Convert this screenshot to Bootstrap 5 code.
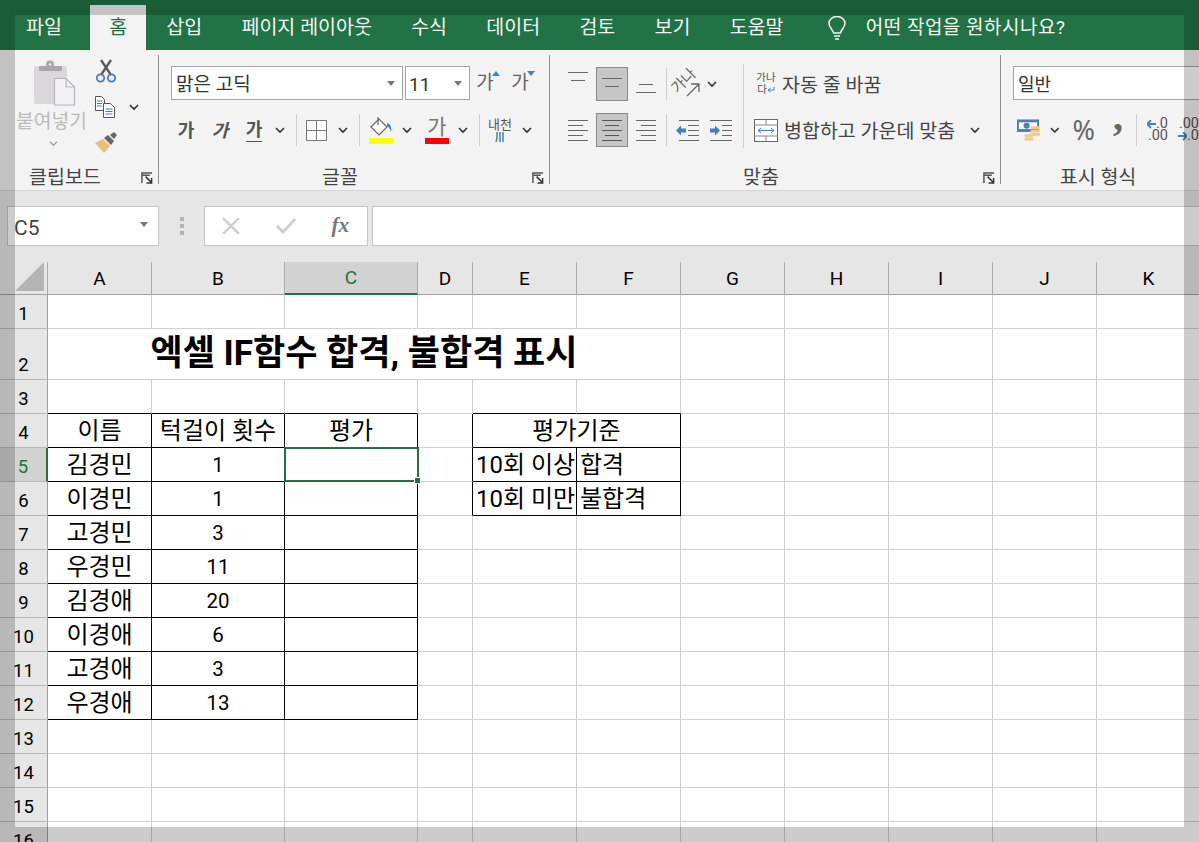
<!DOCTYPE html>
<html lang="ko">
<head>
<meta charset="utf-8">
<title>Excel</title>
<link href="https://cdn.jsdelivr.net/npm/bootstrap@5.3.0/dist/css/bootstrap.min.css" rel="stylesheet">
<style>
html,body{height:842px;overflow:hidden}
body{font-family:Roboto,"Noto Sans CJK KR",sans-serif;background:#fff;color:#000;width:1199px}
.xl-frame{position:fixed;inset:0;border:15px solid rgba(0,0,0,.2);pointer-events:none;z-index:20}
.xl-tabs{height:50px;background:#217346;color:#f4f8f5;font-size:19.5px;padding-left:7px}
.xl-tab{padding:0 19px;margin-right:1.25px;height:45px;margin-top:5px;line-height:46px;white-space:nowrap}
.xl-tab-on{background:#f3f3f3;color:#217346;margin-left:8px}
.xl-tell{margin-left:23px;margin-top:5px;height:45px;gap:19px;font-size:19px;letter-spacing:.5px}
.xl-tell span{padding-top:2px}
.xl-ribbon{height:141px;background:#f3f3f3;border-bottom:1px solid #d4d4d4;color:#444;font-size:18px;overflow:hidden}
.xl-group{padding-top:5px;height:134px;position:relative;flex:none}
.xl-g1{width:159px}.xl-g2{width:391px}.xl-g3{width:451px}.xl-g4{width:198px}
.xl-body{height:112px;border-right:1px solid #8f8f8f}
.xl-foot{height:17px;border-right:1px solid #8f8f8f;line-height:21px;font-size:19.5px;color:#444}
.xl-label{flex:1;text-align:center;white-space:nowrap}
.xl-launch{width:28px;padding-left:11px;padding-top:5px;line-height:0}
.xl-paste{width:73px;margin-left:15px;margin-right:2px;color:#bbb;padding-top:5px;font-size:19.3px;line-height:26px;text-align:center;white-space:nowrap}
.xl-paste svg{display:block;margin:0 auto 3px 18px}
.xl-clipsmall{padding-left:5px}
.xl-combo{height:34px;background:#fff;border:1px solid #a3a3a3;color:#333;font-size:19px;line-height:34px;padding:0 7px 0 4px;flex:none}
.xl-combo span{padding-top:3px}
.xl-row1{height:34px;margin-top:11px}
.xl-row2{height:34px;margin-top:13px}
.xl-rowa{height:34px;margin-top:12px}
.xl-btn{flex:none;display:flex;align-items:center;justify-content:center;height:34px;color:#555}
.xl-grow{font-size:19px;color:#666}
.xl-div{flex:none;width:1px;height:32px;background:#cdcdcd}
.xl-tall{flex:none;width:1px;height:84px;background:#cdcdcd;margin-top:9px}
.xl-bold{font-weight:700;font-size:18px;color:#555}
.xl-under{border-bottom:1px solid #555;line-height:22px}
.xl-ital{font-style:italic}
.xl-tiny{font-size:13px;line-height:13px;color:#555;text-align:center}
.xl-wrapi{font-size:10.5px;line-height:12px;width:20px;white-space:nowrap}
.xl-orient{position:relative;width:34px;height:34px;flex:none}
.xl-rot{position:absolute;left:1px;top:6px;transform:rotate(-45deg);font-size:15px;line-height:16px;color:#666;white-space:nowrap}
.xl-orient svg{position:absolute;left:17px;top:16px}
.xl-active{background:#c6c6c6;border:1px solid #8a8a8a;height:34px;width:32px}
.xl-text{font-size:19.5px;color:#444;white-space:nowrap;line-height:34px;padding-top:4px}
.xl-pct{font-size:27px;color:#666;line-height:34px;font-family:"Noto Sans",sans-serif}
.xl-comma{font-size:40px;font-weight:700;font-family:"Liberation Serif",serif;color:#666;line-height:34px;transform:translateY(-13px)}
.xl-dec{font-size:14.5px;line-height:12px;color:#555;text-align:right;white-space:nowrap}
.xl-fbar{height:71px;background:#e6e6e6;padding:15px 0 16px 7px;color:#444}
.xl-name{width:152px;height:40px;background:#fff;border:1px solid #c6c6c6;font-size:21px;padding:0 10px 0 6px;color:#444}
.xl-name span{padding-top:6px}
.xl-name svg{margin-bottom:3px}
.xl-dots{width:45px;gap:3px}
.xl-dots i{display:block;width:4px;height:4px;background:#b4b4b4}
.xl-fx{width:164px;height:40px;background:#fff;border:1px solid #c6c6c6;padding:0 18px 0 17px;margin-right:4px}
.xl-fxt{font-family:"Liberation Serif",serif;font-style:italic;font-weight:700;font-size:21px;color:#777}
.xl-input{flex:1;height:40px;background:#fff;border:1px solid #c6c6c6;border-right:0}
.xl-sheet.table{width:1201px;table-layout:fixed;border-collapse:separate;border-spacing:0;margin:0;color:#000;font-size:24px}
.xl-sheet.table>*>*>*{padding:0;height:34px;background:#fff;border:0;border-right:1px solid #d0d0d0;border-bottom:1px solid #d0d0d0;text-align:center;vertical-align:bottom;line-height:31px;box-shadow:none;font-weight:400;white-space:nowrap;overflow:visible}
.xl-sheet.table>thead>tr>*{height:33px;background:#e6e6e6;border-right-color:#ababab;border-bottom-color:#9f9f9f;font-size:19px;line-height:31px}
.xl-sheet.table>*>tr>th[scope=row]{background:#e6e6e6;border-right-color:#9f9f9f;border-bottom-color:#b8b8b8;font-size:18.5px;line-height:28px}
.xl-sheet.table>thead>tr>th.xl-hcol{background:#d2d2d2;color:#217346;border-bottom:2px solid #217346}
.xl-sheet.table>*>tr>th.xl-hrow{background:#d2d2d2;color:#217346;border-right:2px solid #217346}
.xl-sheet.table>*>tr.xl-tallrow>*{height:51px}
.xl-sheet.table>*>tr>.xl-title{font-size:35px;font-weight:700;line-height:43px;padding-bottom:4px}
.xl-sheet.table>*>tr>td.xl-bb{border-bottom-color:#000}
.xl-sheet.table>*>tr>td.xl-br{border-right-color:#000}
.xl-sheet.table>*>tr>td.xl-num{font-size:20.5px;line-height:31px}
.xl-sheet.table>*>tr>td.xl-left{text-align:left;padding-left:3px}
.xl-sel{position:absolute;top:-1px;left:-1px;right:-2px;bottom:-1px;border:2px solid #217346}
.xl-handle{position:absolute;right:-4px;bottom:-4px;width:7px;height:7px;background:#217346;border:1px solid #fff}
</style>
</head>
<body>
<svg width="0" height="0" class="position-absolute">
<symbol id="chev" viewBox="0 0 10 7"><path d="M1 1l4 4 4-4" fill="none" stroke="#333" stroke-width="1.6"/></symbol>
<symbol id="tri" viewBox="0 0 8 5"><path d="M0 0h8L4 5z" fill="#777"/></symbol>
<symbol id="launch" viewBox="0 0 13 13"><path d="M1 12V1h11M1.500 3.500h8" fill="none" stroke="#555" stroke-width="1.6"/><path d="M5 5l6 6M11.500 6.500v5.500h-5.500" fill="none" stroke="#333" stroke-width="1.6"/></symbol>
</svg>

<div class="xl-tabs d-flex">
  <div class="xl-tab">파일</div>
  <div class="xl-tab xl-tab-on">홈</div>
  <div class="xl-tab">삽입</div>
  <div class="xl-tab">페이지 레이아웃</div>
  <div class="xl-tab">수식</div>
  <div class="xl-tab">데이터</div>
  <div class="xl-tab">검토</div>
  <div class="xl-tab">보기</div>
  <div class="xl-tab">도움말</div>
  <div class="xl-tell d-flex align-items-center">
    <svg width="20" height="24" viewBox="0 0 20 24"><path d="M6.500 17c0-3-4.500-5-4.500-9.500a8 7 0 0 1 16 0c0 4.500-4.500 6.500-4.500 9.500z" fill="none" stroke="#f4f8f5" stroke-width="1.500"/><path d="M7 20h6M8 23h4" stroke="#f4f8f5" stroke-width="1.500"/></svg>
    <span>어떤 작업을 원하시나요?</span>
  </div>
</div>

<div class="xl-ribbon d-flex">
  <section class="xl-group xl-g1">
    <div class="xl-body d-flex">
      <div class="xl-paste">
        <svg width="44" height="46" viewBox="0 0 44 46"><rect x="1" y="6" width="33" height="38" rx="2" fill="#dbd8db"/><rect x="6" y="6" width="23" height="5" rx="1" fill="#a9a7a9"/><circle cx="17" cy="4.500" r="4" fill="#a9a7a9"/><circle cx="17" cy="4.500" r="1.200" fill="#f3f3f3"/><path d="M21.500 18.500H33l8.500 8.500v18h-20z" fill="#f3f1f5" stroke="#b5b5b5" stroke-width="1.200"/><path d="M33 18.500V27h8.500" fill="none" stroke="#b5b5b5" stroke-width="1.200"/></svg>
        <div>붙여넣기</div>
        <svg width="9" height="6" style="margin:6px auto 0 34px"><use href="#chev" opacity=".4"/></svg>
      </div>
      <div class="xl-clipsmall d-flex flex-column">
        <svg width="22" height="25" viewBox="0 0 22 25" class="mt-1"><path d="M6 1l10 15M16 1L6 16" stroke="#5a5a5a" stroke-width="2.300"/><circle cx="5.500" cy="19" r="3.700" fill="none" stroke="#4a7fb5" stroke-width="1.800"/><circle cx="16.500" cy="19" r="3.700" fill="none" stroke="#4a7fb5" stroke-width="1.800"/></svg>
        <div class="d-flex align-items-center" style="margin-top:12px">
          <svg width="21" height="22" viewBox="0 0 21 22"><path d="M.5.500h6l3 3v11h-9z" fill="#fff" stroke="#555"/><path d="M2 5h5M2 7.500h5M2 10h5" stroke="#4a7fb5"/><path d="M8.500 7.500h7l4 4v10h-11z" fill="#fff" stroke="#555"/><path d="M10.500 13h7M10.500 15.500h7M10.500 18h7" stroke="#4a7fb5"/></svg>
          <svg width="10" height="7" style="margin-left:13px"><use href="#chev"/></svg>
        </div>
        <svg width="23" height="21" viewBox="0 0 23 21" style="margin-top:14px"><path d="M0 11l8-4 7 7-6 7z" fill="#e8c07d"/><path d="M9 6l4-3 6 6-3 4z" fill="#666"/><path d="M15 3l4-3 3 3-3 4z" fill="#666"/></svg>
      </div>
    </div>
    <div class="xl-foot d-flex"><span class="xl-label">클립보드</span><span class="xl-launch"><svg width="12" height="12"><use href="#launch"/></svg></span></div>
  </section>

  <section class="xl-group xl-g2">
    <div class="xl-body d-flex flex-column ps-2">
      <div class="xl-row1 d-flex" style="margin-left:4px">
        <div class="xl-combo d-flex justify-content-between align-items-center" style="width:232px"><span>맑은 고딕</span><svg width="8" height="5"><use href="#tri"/></svg></div>
        <div class="xl-combo d-flex justify-content-between align-items-center" style="width:65px;margin-left:2px;padding-left:3px"><span>11</span><svg width="8" height="5"><use href="#tri"/></svg></div>
        <div class="xl-btn xl-grow" style="width:26px;margin-left:5px">가<svg width="8" height="5" viewBox="0 0 8 5" style="margin:-20px 0 0 -2px"><path d="M0 5h8L4 0z" fill="#4a7fb5"/></svg></div>
        <div class="xl-btn xl-grow" style="width:26px;margin-left:9px">가<svg width="8" height="5" viewBox="0 0 8 5" style="margin:-20px 0 0 -2px"><path d="M0 0h8L4 5z" fill="#4a7fb5"/></svg></div>
      </div>
      <div class="xl-row2 d-flex align-items-center" style="margin-left:2px">
        <div class="xl-btn xl-bold" style="width:34px">가</div>
        <div class="xl-btn xl-bold xl-ital" style="width:34px">가</div>
        <div class="xl-btn xl-bold" style="width:34px"><span class="xl-under">가</span></div>
        <svg width="10" height="7" class="ms-1"><use href="#chev"/></svg>
        <div class="xl-div" style="margin-left:11px"></div>
        <svg width="21" height="21" viewBox="0 0 21 21" style="margin-left:9px"><path d="M.5.500h20v20H.5zM10.500 0v21M0 10.500h21" fill="#fff" stroke="#777"/></svg>
        <svg width="10" height="7" style="margin-left:11px"><use href="#chev"/></svg>
        <div class="xl-div" style="margin-left:11px"></div>
        <svg width="24" height="27" viewBox="0 0 24 27" style="margin-left:9px"><path d="M2 10l8-8 8 8-8 8z" fill="#fff" stroke="#666" stroke-width="1.200"/><path d="M9 0v8" stroke="#666" stroke-width="1.200"/><path d="M18 6c4 1 5 5 4 9-1-3-2-5-4-6z" fill="#4a7fb5"/><rect y="21" width="24" height="6" fill="#ff0"/></svg>
        <svg width="10" height="7" style="margin-left:9px"><use href="#chev"/></svg>
        <div class="d-flex flex-column align-items-center" style="width:24px;margin-left:13px"><span style="font-size:21px;line-height:21px;color:#777">가</span><span class="d-block w-100" style="height:6px;background:#f00"></span></div>
        <svg width="10" height="7" style="margin-left:9px"><use href="#chev"/></svg>
        <div class="xl-div" style="margin-left:11px"></div>
        <div class="d-flex flex-column align-items-center" style="width:22px;margin-left:9px"><span class="xl-tiny text-nowrap">내천</span><svg width="10" height="12" viewBox="0 0 10 12"><path d="M2 1v6l-1 4M5 1v10M8 1v10" fill="none" stroke="#4a7fb5" stroke-width="1.500"/></svg></div>
        <svg width="10" height="7" style="margin-left:11px"><use href="#chev"/></svg>
      </div>
    </div>
    <div class="xl-foot d-flex"><span class="xl-label">글꼴</span><span class="xl-launch"><svg width="12" height="12"><use href="#launch"/></svg></span></div>
  </section>

  <section class="xl-group xl-g3">
    <div class="xl-body d-flex">
      <div style="width:193px;padding-left:14px">
        <div class="xl-rowa d-flex align-items-center">
          <div class="xl-btn" style="width:28px"><svg width="20" height="34" viewBox="0 0 20 34"><path d="M0 5.500h20M3 13.500h14" stroke="#666"/></svg></div>
          <div class="xl-btn xl-active" style="margin-left:4px"><svg width="20" height="16" viewBox="0 0 20 16"><path d="M0 2.500h20M3 10.500h14" stroke="#666"/></svg></div>
          <div class="xl-btn" style="width:28px;margin-left:4px"><svg width="20" height="34" viewBox="0 0 20 34"><path d="M3 17.500h14M0 25.500h20" stroke="#666"/></svg></div>
          <div class="xl-div" style="margin-left:6px"></div>
          <div class="xl-orient" style="margin-left:2px"><span class="xl-rot">가나</span><svg width="14" height="14" viewBox="0 0 14 14"><path d="M1 13L13 1M5 1h8v8" fill="none" stroke="#666" stroke-width="1.300"/></svg></div>
          <svg width="10" height="7" class="ms-1"><use href="#chev"/></svg>
        </div>
        <div class="xl-rowa d-flex align-items-center">
          <div class="xl-btn" style="width:28px"><svg width="20" height="21" viewBox="0 0 20 21"><path d="M0 .500h20M0 5.500h15M0 10.500h20M0 15.500h15M0 20.500h20" stroke="#666"/></svg></div>
          <div class="xl-btn xl-active" style="margin-left:4px"><svg width="20" height="21" viewBox="0 0 20 21"><path d="M0 .500h20M3 5.500h14M0 10.500h20M3 15.500h14M0 20.500h20" stroke="#555"/></svg></div>
          <div class="xl-btn" style="width:28px;margin-left:4px"><svg width="20" height="21" viewBox="0 0 20 21"><path d="M0 .500h20M5 5.500h15M0 10.500h20M5 15.500h15M0 20.500h20" stroke="#666"/></svg></div>
          <div class="xl-div" style="margin-left:6px"></div>
          <svg width="23" height="21" viewBox="0 0 23 21" style="margin-left:9px"><path d="M3 .500h20M12 5.500h11M12 10.500h11M12 15.500h11M3 20.500h20" stroke="#666"/><path d="M0 10.500l5-5v3h5v4h-5v3z" fill="#4a7fb5"/></svg>
          <svg width="23" height="21" viewBox="0 0 23 21" style="margin-left:11px"><path d="M0 .500h22M12 5.500h10M12 10.500h10M12 15.500h10M0 20.500h22" stroke="#666"/><path d="M10 10.500l-5-5v3H0v4h5v3z" fill="#4a7fb5"/></svg>
        </div>
      </div>
      <div class="xl-tall"></div>
      <div class="flex-grow-1" style="padding-left:10px">
        <div class="xl-rowa d-flex align-items-center" style="padding-left:2px">
          <div class="xl-tiny xl-wrapi">가나<br>다<svg width="8" height="7" viewBox="0 0 8 7"><path d="M7 0v3H2M3.500 1L1 3l2.500 2" fill="none" stroke="#4a7fb5"/></svg></div>
          <span class="xl-text" style="margin-left:6px">자동 줄 바꿈</span>
        </div>
        <div class="xl-rowa d-flex align-items-center">
          <svg width="24" height="23" viewBox="0 0 24 23"><rect x=".5" y=".5" width="23" height="22" fill="#fff" stroke="#666"/><path d="M0 6h24M0 17h24M12 1v5M12 17v5" stroke="#888"/><path d="M4 11.500h16" stroke="#4a7fb5" stroke-width="1.200"/><path d="M7 9l-3 2.500L7 14M17 9l3 2.500-3 2.500" fill="none" stroke="#4a7fb5"/></svg>
          <span class="xl-text" style="margin-left:6px">병합하고 가운데 맞춤</span>
          <svg width="10" height="7" style="margin-left:15px"><use href="#chev"/></svg>
        </div>
      </div>
    </div>
    <div class="xl-foot d-flex"><span class="xl-label">맞춤</span><span class="xl-launch"><svg width="12" height="12"><use href="#launch"/></svg></span></div>
  </section>

  <section class="xl-group xl-g4">
    <div class="xl-body d-flex flex-column border-0" style="padding-left:12px">
      <div class="xl-row1 d-flex">
        <div class="xl-combo" style="width:260px;font-size:18px;line-height:36px">일반</div>
      </div>
      <div class="xl-row2 d-flex align-items-center" style="padding-left:4px">
        <svg width="24" height="23" viewBox="0 0 24 23"><rect width="23" height="13" fill="#4a7fb5"/><rect x="2" y="3" width="19" height="7" fill="#fff"/><circle cx="10" cy="6.500" r="3.200" fill="#4a7fb5"/><rect x="14" y="7" width="10" height="3" rx="1" fill="#f0c987"/><rect x="14" y="10.500" width="10" height="3" rx="1" fill="#f0c987"/><rect x="14" y="14" width="10" height="3" rx="1" fill="#f0c987"/><rect x="8" y="15.500" width="9" height="3" rx="1" fill="#f0c987"/><rect x="8" y="19" width="9" height="3" rx="1" fill="#f0c987"/></svg>
        <svg width="10" height="7" style="margin-left:10px"><use href="#chev"/></svg>
        <span class="xl-pct" style="margin-left:13px">%</span>
        <span class="xl-comma" style="margin-left:18px">,</span>
        <div class="xl-div" style="margin-left:13px"></div>
        <div class="xl-dec" style="margin-left:10px"><svg width="9" height="9" viewBox="0 0 9 9"><path d="M4 0L0 4l4 4M0 4h9" fill="none" stroke="#4a7fb5" stroke-width="1.800"/></svg>.0<br>.00</div>
        <div class="xl-dec" style="margin-left:10px">.00<br><svg width="9" height="9" viewBox="0 0 9 9"><path d="M5 0l4 4-4 4M9 4H0" fill="none" stroke="#4a7fb5" stroke-width="1.800"/></svg>.0</div>
      </div>
    </div>
    <div class="xl-foot d-flex border-0"><span class="xl-label" style="padding-right:4px">표시 형식</span></div>
  </section>
</div>

<div class="xl-fbar d-flex">
  <div class="xl-name d-flex justify-content-between align-items-center"><span>C5</span><svg width="8" height="5"><use href="#tri"/></svg></div>
  <div class="xl-dots d-flex flex-column align-items-center justify-content-center"><i></i><i></i><i></i></div>
  <div class="xl-fx d-flex justify-content-between align-items-center">
    <svg width="18" height="16" viewBox="0 0 18 16"><path d="M1 0l16 16M17 0L1 16" stroke="#cfcfcf" stroke-width="2.500"/></svg>
    <svg width="20" height="16" viewBox="0 0 20 16"><path d="M1 8l6 6L19 1" fill="none" stroke="#cfcfcf" stroke-width="3"/></svg>
    <span class="xl-fxt">fx</span>
  </div>
  <div class="xl-input"></div>
</div>

<table class="table xl-sheet">
  <colgroup><col style="width:48px"><col style="width:104px"><col style="width:133px"><col style="width:133px"><col style="width:55px"><col style="width:104px"><col style="width:104px"><col style="width:104px"><col style="width:104px"><col style="width:104px"><col style="width:104px"><col style="width:104px"></colgroup>
  <thead>
    <tr>
      <th class="position-relative"><svg width="29" height="29" viewBox="0 0 29 29" class="position-absolute" style="right:3px;bottom:3px"><path d="M29 0v29H0z" fill="#b4b4b4"/></svg></th>
      <th>A</th><th>B</th><th class="xl-hcol">C</th><th>D</th><th>E</th><th>F</th><th>G</th><th>H</th><th>I</th><th>J</th><th>K</th>
    </tr>
  </thead>
  <tbody>
    <tr><th scope="row">1</th><td></td><td></td><td></td><td></td><td></td><td></td><td></td><td></td><td></td><td></td><td></td></tr>
    <tr class="xl-tallrow"><th scope="row">2</th><td colspan="6" class="xl-title">엑셀 IF함수 합격, 불합격 표시</td><td></td><td></td><td></td><td></td><td></td></tr>
    <tr><th scope="row">3</th><td class="xl-bb"></td><td class="xl-bb"></td><td class="xl-bb"></td><td></td><td class="xl-bb"></td><td class="xl-bb"></td><td></td><td></td><td></td><td></td><td></td></tr>
    <tr><th scope="row">4</th><td class="xl-bb xl-br">이름</td><td class="xl-bb xl-br">턱걸이 횟수</td><td class="xl-bb xl-br">평가</td><td class="xl-br"></td><td colspan="2" class="xl-bb xl-br">평가기준</td><td></td><td></td><td></td><td></td><td></td></tr>
    <tr><th scope="row" class="xl-hrow">5</th><td class="xl-bb xl-br">김경민</td><td class="xl-bb xl-br xl-num">1</td><td class="xl-bb xl-br position-relative"><div class="xl-sel"><div class="xl-handle"></div></div></td><td class="xl-br"></td><td class="xl-bb xl-br xl-left">10회 이상</td><td class="xl-bb xl-br xl-left">합격</td><td></td><td></td><td></td><td></td><td></td></tr>
    <tr><th scope="row">6</th><td class="xl-bb xl-br">이경민</td><td class="xl-bb xl-br xl-num">1</td><td class="xl-bb xl-br"></td><td class="xl-br"></td><td class="xl-bb xl-br xl-left">10회 미만</td><td class="xl-bb xl-br xl-left">불합격</td><td></td><td></td><td></td><td></td><td></td></tr>
    <tr><th scope="row">7</th><td class="xl-bb xl-br">고경민</td><td class="xl-bb xl-br xl-num">3</td><td class="xl-bb xl-br"></td><td></td><td></td><td></td><td></td><td></td><td></td><td></td><td></td></tr>
    <tr><th scope="row">8</th><td class="xl-bb xl-br">우경민</td><td class="xl-bb xl-br xl-num">11</td><td class="xl-bb xl-br"></td><td></td><td></td><td></td><td></td><td></td><td></td><td></td><td></td></tr>
    <tr><th scope="row">9</th><td class="xl-bb xl-br">김경애</td><td class="xl-bb xl-br xl-num">20</td><td class="xl-bb xl-br"></td><td></td><td></td><td></td><td></td><td></td><td></td><td></td><td></td></tr>
    <tr><th scope="row">10</th><td class="xl-bb xl-br">이경애</td><td class="xl-bb xl-br xl-num">6</td><td class="xl-bb xl-br"></td><td></td><td></td><td></td><td></td><td></td><td></td><td></td><td></td></tr>
    <tr><th scope="row">11</th><td class="xl-bb xl-br">고경애</td><td class="xl-bb xl-br xl-num">3</td><td class="xl-bb xl-br"></td><td></td><td></td><td></td><td></td><td></td><td></td><td></td><td></td></tr>
    <tr><th scope="row">12</th><td class="xl-bb xl-br">우경애</td><td class="xl-bb xl-br xl-num">13</td><td class="xl-bb xl-br"></td><td></td><td></td><td></td><td></td><td></td><td></td><td></td><td></td></tr>
    <tr><th scope="row">13</th><td></td><td></td><td></td><td></td><td></td><td></td><td></td><td></td><td></td><td></td><td></td></tr>
    <tr><th scope="row">14</th><td></td><td></td><td></td><td></td><td></td><td></td><td></td><td></td><td></td><td></td><td></td></tr>
    <tr><th scope="row">15</th><td></td><td></td><td></td><td></td><td></td><td></td><td></td><td></td><td></td><td></td><td></td></tr>
    <tr><th scope="row">16</th><td></td><td></td><td></td><td></td><td></td><td></td><td></td><td></td><td></td><td></td><td></td></tr>
  </tbody>
</table>
<div class="xl-frame"></div>
<script src="https://cdn.jsdelivr.net/npm/bootstrap@5.3.0/dist/js/bootstrap.bundle.min.js"></script>
</body>
</html>
